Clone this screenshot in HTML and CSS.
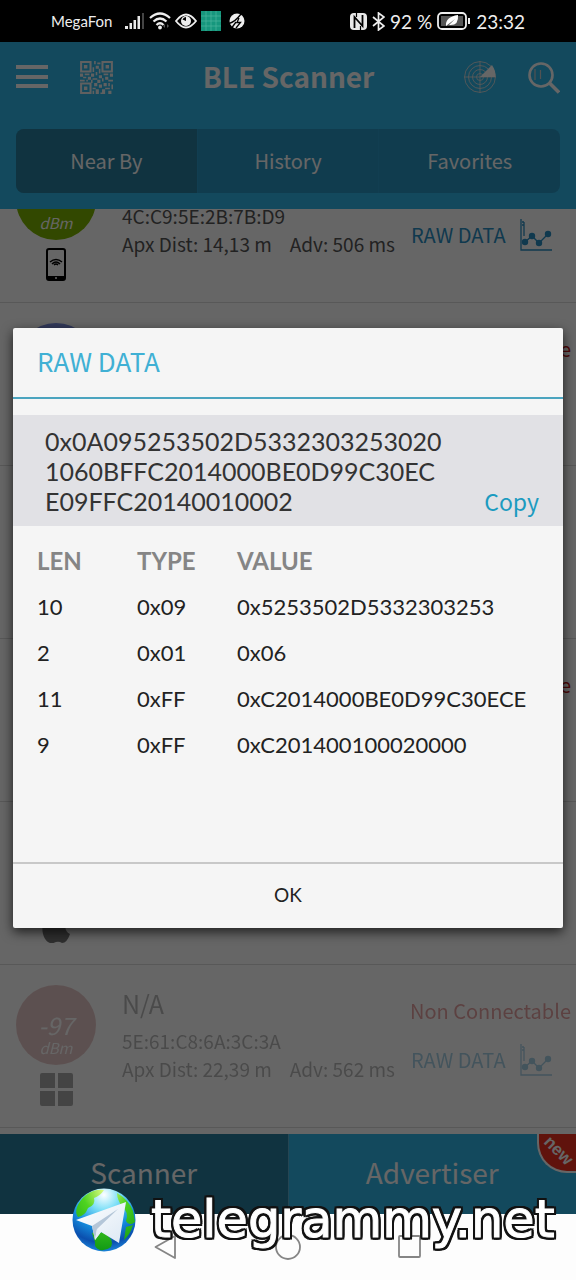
FILE: index.html
```html
<!DOCTYPE html>
<html lang="en">
<head>
<meta charset="utf-8">
<meta name="viewport" content="width=device-width, initial-scale=1">
<title>BLE Scanner</title>
<link rel="stylesheet" href="styles.css">
</head>
<body>
<svg class="defs" aria-hidden="true">
  <symbol id="chart" viewBox="0 0 32 32">
    <g fill="none" stroke="currentColor"><path d="M1 0V31H32M4 3v14M2 3h2M2 6h2" stroke-width="1.3"/><path d="M5 23L12 17L19 24L28 15" stroke-width="1.3"/></g>
    <g fill="currentColor"><circle cx="5" cy="23" r="3.2"/><circle cx="12" cy="17" r="3.2"/><circle cx="19" cy="24" r="3.2"/><circle cx="28" cy="15" r="3.2"/></g>
  </symbol>
</svg>
<div class="phone">
  <div class="status">
    <div class="status-group">
      <span class="carrier">MegaFon</span>
      <svg width="20" height="18" viewBox="0 0 20 18"><path d="M0 14h3v3H0zM4.500 11h2.500v6H4.500zM8.500 8h2.500v9H8.500zM12.500 4h2.500v13h-2.500z" fill="#e8e8e8"/><path d="M17 1h2v16h-2z" fill="#444"/></svg>
      <svg width="22" height="18" viewBox="0 0 22 18"><g fill="none" stroke="#eee" stroke-width="2.200"><path d="M1 6Q11-3 21 6M4.500 9.500Q11 3.500 17.500 9.500M7.500 13Q11 9.500 14.500 13"/></g><circle cx="11" cy="15.500" r="1.900" fill="#eee"/><path d="M16 12l-2 2 2 2zM18 12l2 2-2 2z" fill="#555"/></svg>
      <svg width="22" height="16" viewBox="0 0 22 16"><path d="M1 8Q11-5 21 8Q11 21 1 8z" fill="none" stroke="#eee" stroke-width="1.800"/><circle cx="11" cy="8" r="5" fill="#eee"/><path d="M11 8V4A4 4 0 0 0 7.500 6.500z" fill="#000"/></svg>
      <svg width="20" height="20" viewBox="0 0 20 20"><path d="M0 0h20v20H0z" fill="#16977d"/><path d="M5 0v20M10 0v20M15 0v20M0 5h20M0 10h20M0 15h20" stroke="#4bb49f" stroke-width=".7"/></svg>
      <svg class="ball" width="16" height="16" viewBox="0 0 16 16"><circle cx="8" cy="8" r="7.500" fill="#eee"/><path d="M0 10.500Q6 9 12 1M10 5L8 9.500H11.500L7 15M3 14.500L7 9" fill="none" stroke="#000" stroke-width="1.300"/></svg>
    </div>
    <div class="status-group right">
      <svg width="17" height="17" viewBox="0 0 17 17"><rect width="17" height="17" rx="4" fill="#e8e8e8"/><path d="M4.500 15V4L12.500 13V2" fill="none" stroke="#000" stroke-width="1.800"/><path d="M6.500 0v4M10.500 17v-4" stroke="#000" stroke-width="1.200"/></svg>
      <svg width="13" height="19" viewBox="0 0 13 19"><path d="M1 5L12 14L6.500 18V1L12 5L1 14" fill="none" stroke="#eee" stroke-width="1.700"/></svg>
      <span>92 %</span>
      <svg width="34" height="18" viewBox="0 0 34 18"><rect x="1" y="1" width="28" height="16" rx="4" fill="#000" stroke="#eee" stroke-width="1.800"/><rect x="4" y="4" width="22" height="10" fill="#555"/><path d="M9 14Q8 5 21 3Q22 14 12 13L18 7L9 14z" fill="#fff"/><path d="M32 6v6" stroke="#eee" stroke-width="2"/></svg>
      <span class="clock">23:32</span>
    </div>
  </div>

  <div class="screen">
    <header class="header">
      <div class="toolbar">
        <button class="icon-btn" aria-label="Menu"><svg width="32" height="24" viewBox="0 0 32 24"><path d="M0 2h32M0 12h32M0 21h32" stroke="#fff" stroke-width="4"/></svg></button>
        <button class="icon-btn" aria-label="QR code"><svg width="33" height="33" viewBox="0 0 21 21"><g fill="none" stroke="#f0f0f0" stroke-width="1.300"><path d="M.7.7h6v6h-6zM14.300.7h6v6h-6zM.7 14.300h6v6h-6z"/></g><path fill="#f0f0f0" d="M2.500 2.500h2.200v2.200H2.500zM16.300 2.500h2.200v2.200h-2.200zM2.500 16.300h2.200v2.200H2.500zM9 0h1v2H9zM11 1h2v1h-2zM10 3h2v2h-2zM8 4h1v3H8zM12 5h1v3h-1zM10 7h1v2h-1zM0 8h2v2H0zM3 8h3v1H3zM2 10h2v1H2zM0 12h3v1H0zM5 10h2v2H5zM4 12h1v1H4zM7 8h2v2H7zM8 11h3v1H8zM7 12h1v2H7zM12 9h2v2h-2zM15 8h3v1h-3zM19 8h2v2h-2zM16 10h2v2h-2zM14 11h1v2h-1zM18 12h3v1h-3zM11 12h2v2h-2zM9 14h2v2H9zM8 17h2v1H8zM10 18h2v3h-2zM12 15h2v2h-2zM15 14h2v2h-2zM18 14h1v2h-1zM20 15h1v3h-1zM16 17h3v1h-3zM14 18h2v2h-2zM18 19h2v2h-2zM8 19h1v2H8zM13 20h3v1h-3z"/></svg></button>
        <h1 class="title">BLE Scanner</h1>
        <button class="icon-btn" aria-label="Radar"><svg width="32" height="32" viewBox="0 0 32 32"><g fill="none" stroke="#ddd" stroke-width=".9"><circle cx="16" cy="16" r="15.400"/><circle cx="16" cy="16" r="11.500"/><circle cx="16" cy="16" r="7.500"/><circle cx="16" cy="16" r="3.500"/><path d="M16 0v32M0 16h32"/></g><path d="M16 16L28 4Q32 10 31.500 16z" fill="#fff"/></svg></button>
        <button class="icon-btn" aria-label="Search"><svg width="32" height="33" viewBox="0 0 32 33"><circle cx="13" cy="14" r="11.500" fill="none" stroke="#fff" stroke-width="2.600"/><path d="M21.500 22L31 31.500" stroke="#fff" stroke-width="3.500"/><path d="M7 8v11M12.500 9v9" stroke="#ccc" stroke-width="1.200"/></svg></button>
      </div>
      <nav class="tabs">
        <button class="tab active">Near By</button>
        <button class="tab">History</button>
        <button class="tab">Favorites</button>
      </nav>
    </header>

    <main class="list">
      <article class="device">
        <div class="signal">
          <div class="badge green"><i>dBm</i></div>
          <svg width="20" height="33" viewBox="0 0 20 33"><rect x="1" y="1" width="18" height="31" rx="2" fill="none" stroke="#000" stroke-width="2"/><path d="M1 28h18v4H1z"/><circle cx="10" cy="30" r="1" fill="#fff"/><path d="M4 14Q10 9 16 14M6 16Q10 12 14 16M8 17Q10 15 12 17" fill="none" stroke="#000" stroke-width="1.500"/></svg>
        </div>
        <div class="info">
          <h2></h2>
          <p>4C:C9:5E:2B:7B:D9</p>
          <p class="stats"><span>Apx Dist: 14,13 m</span><span>Adv: 506 ms</span></p>
        </div>
        <div class="actions">
          <span class="warn"></span>
          <button class="raw">RAW DATA <svg width="32" height="32"><use href="#chart"/></svg></button>
        </div>
      </article>
      <article class="device">
        <div class="signal"><div class="badge blue"></div></div>
        <div class="actions"><span class="warn">Non Connectable</span></div>
      </article>
      <article class="device tall"></article>
      <article class="device">
        <div class="actions"><span class="warn">Non Connectable</span></div>
      </article>
      <article class="device">
        <div class="signal">
          <div class="badge"></div>
          <svg width="28" height="33" viewBox="0 0 28 33"><path d="M14 9C17 9 19 7 22 8Q25 8 27 11C22 14 22 21 28 24Q25 33 20 33Q17 31 14 32Q10 34 8 33C2 31-2 20 2 12C5 6 10 8 14 9zM14 7Q13 1 20 0Q20 6 14 7z" fill="#777"/></svg>
        </div>
      </article>
      <article class="device">
        <div class="signal faded">
          <div class="badge red"><b>-97</b><i>dBm</i></div>
          <svg width="33" height="33" viewBox="0 0 33 33"><path d="M2 0h13v15H0V2q0-2 2-2zM18 0h13q2 0 2 2v13H18zM0 18h15v15H2q-2 0-2-2zM18 18h15v13q0 2-2 2H18z" fill="#444"/></svg>
        </div>
        <div class="info faded-text">
          <h2>N/A</h2>
          <p>5E:61:C8:6A:3C:3A</p>
          <p class="stats"><span>Apx Dist: 22,39 m</span><span>Adv: 562 ms</span></p>
        </div>
        <div class="actions faded-actions">
          <span class="warn">Non Connectable</span>
          <button class="raw">RAW DATA <svg width="32" height="32"><use href="#chart"/></svg></button>
        </div>
      </article>
    </main>

    <nav class="modes">
      <button class="mode active">Scanner</button>
      <button class="mode">Advertiser</button>
      <span class="ribbon"><span>new</span></span>
    </nav>

    <div class="backdrop">
      <section class="dialog" role="dialog" aria-labelledby="dialog-title">
        <h2 class="dialog-title" id="dialog-title">RAW DATA</h2>
        <div class="payload">
          <p>0x0A095253502D5332303253020<br>1060BFFC2014000BE0D99C30EC<br>E09FFC20140010002</p>
          <button class="copy">Copy</button>
        </div>
        <table class="fields">
          <thead><tr><th class="col">LEN</th><th class="col">TYPE</th><th>VALUE</th></tr></thead>
          <tbody>
            <tr><td>10</td><td>0x09</td><td>0x5253502D5332303253</td></tr>
            <tr><td>2</td><td>0x01</td><td>0x06</td></tr>
            <tr><td>11</td><td>0xFF</td><td>0xC2014000BE0D99C30ECE</td></tr>
            <tr><td>9</td><td>0xFF</td><td>0xC201400100020000</td></tr>
          </tbody>
        </table>
        <button class="ok">OK</button>
      </section>
    </div>
  </div>

  <nav class="system">
    <button class="icon-btn" aria-label="Back"><svg width="24" height="26" viewBox="0 0 24 26"><path d="M21 2V24L1.500 13z" fill="none" stroke="#858585" stroke-width="1.800" stroke-linejoin="round"/></svg></button>
    <button class="icon-btn" aria-label="Home"><svg width="26" height="26" viewBox="0 0 26 26"><circle cx="13" cy="13" r="12" fill="none" stroke="#858585" stroke-width="1.800"/></svg></button>
    <button class="icon-btn" aria-label="Recents"><svg width="24" height="26" viewBox="0 0 24 26"><rect x="1" y="2" width="21" height="21" rx="1" fill="none" stroke="#858585" stroke-width="1.800"/></svg></button>
  </nav>

  <div class="watermark">
    <svg width="64" height="64" viewBox="0 0 64 64">
      <defs>
        <radialGradient id="sea" cx=".5" cy=".1" r=".95"><stop offset="0" stop-color="#fff"/><stop offset=".25" stop-color="#7fe0f8"/><stop offset=".55" stop-color="#1590e0"/><stop offset=".8" stop-color="#0b4fae"/><stop offset="1" stop-color="#2196e8"/></radialGradient>
        <radialGradient id="land" cx=".5" cy="0" r="1"><stop offset="0" stop-color="#eaff8a"/><stop offset=".4" stop-color="#4ed320"/><stop offset="1" stop-color="#129a14"/></radialGradient>
        <linearGradient id="wing" x1="0" y1="0" x2="1" y2="1"><stop offset="0" stop-color="#fff"/><stop offset="1" stop-color="#dce8f4"/></linearGradient>
      </defs>
      <circle cx="32" cy="32" r="31.500" fill="url(#sea)"/>
      <path d="M14 7Q22 1 32 2Q28 8 22 10Q24 17 16 20Q13 28 6 29Q3 25 5 19Q8 12 14 7zM45 5Q57 12 61 23L63 34Q57 39 54 33Q57 24 51 20Q45 12 45 5zM20 45Q30 42 36 48Q42 53 39 59Q34 63 28 62Q22 60 23 54zM54 39L61 37Q58 47 52 52z" fill="url(#land)"/>
      <path d="M4 32L54 14L47 55L29 44L23 52L20 38z" fill="url(#wing)"/>
      <path d="M20 38L46 21L25 41L23 52z" fill="#b4c6d8"/>
      <path d="M25 41L29 44L23 52z" fill="#e4edf6"/>
    </svg>
    <span class="watermark-text">telegrammy.net</span>
  </div>
</div>
</body>
</html>
```
FILE: styles.css
```css
* { box-sizing: border-box; }

body {
  margin: 0;
  background: #fdfdfd;
  font-family: "Noto Sans CJK SC", "Noto Sans", sans-serif;
}

h1, h2, p { margin: 0; font-weight: 400; }

button {
  margin: 0;
  padding: 0;
  border: 0;
  background: none;
  color: inherit;
  font: inherit;
}

svg { display: block; flex: none; }

.defs { position: absolute; width: 0; height: 0; }

.phone {
  position: relative;
  display: flex;
  flex-direction: column;
  height: 100vh;
  overflow: hidden;
}

/* Status bar */
.status {
  display: flex;
  flex: none;
  justify-content: space-between;
  align-items: center;
  height: 42px;
  padding: 0 51px;
  background: #000;
  color: #eee;
  font-family: Lato, sans-serif;
  font-size: 19px;
}

.status-group { display: flex; align-items: center; gap: 4px; }
.status-group.right { gap: 5px; }
.carrier { margin-right: 9px; font-size: 15px; }
.ball { margin-left: 4px; }

/* App */
.screen {
  position: relative;
  display: flex;
  flex: 1;
  flex-direction: column;
  min-height: 0;
}

.header {
  flex: none;
  padding: 16px;
  background: #30b7e8;
  color: #fff;
}

.toolbar { display: flex; align-items: center; gap: 32px; height: 38px; }

.title {
  flex: 1;
  padding-bottom: 2px;
  text-align: center;
  font-size: 28px;
  font-weight: 700;
  line-height: 36px;
}

.tabs {
  display: flex;
  height: 64px;
  margin-top: 33px;
  overflow: hidden;
  border-radius: 8px;
  background: #2a96c3;
}

.tab { flex: 1; padding-bottom: 2px; font-size: 20px; }
.tab + .tab { border-left: 1px solid #2c9cca; }
.tab.active { background: #2880a0; }

.list {
  display: flex;
  flex: 1;
  flex-direction: column;
  justify-content: flex-end;
  min-height: 0;
  padding-bottom: 6px;
  overflow: hidden;
  background: #fff;
}

.device {
  display: flex;
  flex: none;
  height: 163px;
  padding: 20px 5px 0 16px;
  border-bottom: 1px solid #dcdcdc;
}

.device.tall { height: 173px; }

.signal {
  display: flex;
  flex: none;
  flex-direction: column;
  align-items: center;
  gap: 8px;
  width: 80px;
}

.badge {
  display: flex;
  flex-direction: column;
  align-items: center;
  justify-content: flex-end;
  width: 80px;
  height: 80px;
  padding-bottom: 7px;
  border-radius: 50%;
  color: #fff;
  font-style: italic;
}

.badge b { font-size: 24px; font-weight: 400; line-height: 26px; }
.badge i { font-size: 15px; line-height: 20px; }
.green { background: #7db400; }
.blue { background: #7d8fe0; }
.red { background: #cc8888; }

.info {
  flex: 1;
  padding-left: 26px;
  color: #555;
  font-size: 19px;
  font-weight: 300;
  line-height: 28px;
  white-space: nowrap;
}

.info h2 { height: 40px; font-size: 25px; line-height: 36px; }
.info p:nth-child(2) { padding-top: 2px; }
.stats { display: flex; gap: 18px; }

.actions {
  display: flex;
  flex: none;
  flex-direction: column;
  width: 160px;
  margin-left: auto;
  padding-top: 11px;
  white-space: nowrap;
}

.warn {
  align-self: flex-end;
  height: 30px;
  color: #c01818;
  font-size: 20px;
  line-height: 30px;
}

.raw {
  display: flex;
  align-items: center;
  gap: 14px;
  margin-top: 18px;
  color: #2a8ec4;
  font-size: 20px;
  line-height: 32px;
}

.faded { opacity: .45; }
.faded-text { opacity: .4; }
.faded-actions { opacity: .4; }

.modes {
  position: relative;
  display: flex;
  flex: none;
  height: 80px;
  background: #30b7e8;
  color: #fff;
  font-size: 28px;
}

.mode { flex: 1; padding-bottom: 4px; }
.mode.active { background: #2880a0; border-right: 1px solid #5cb0d0; }

.ribbon {
  position: absolute;
  top: 0;
  right: 0;
  display: flex;
  align-items: center;
  justify-content: center;
  width: 39px;
  height: 39px;
  padding: 0 0 4px 2px;
  border: solid #fff;
  border-width: 0 0 2px 2px;
  border-bottom-left-radius: 30px;
  background: #f03020;
  font: bold 17px/17px "Liberation Sans Narrow", "Liberation Sans", sans-serif;
}

.ribbon span { transform: rotate(45deg); }

/* Dialog */
.backdrop {
  position: absolute;
  inset: 0;
  display: flex;
  align-items: center;
  padding: 0 13px;
  background: rgba(0, 0, 0, .6);
}

.dialog {
  display: flex;
  flex: 1;
  flex-direction: column;
  min-height: 600px;
  border-radius: 2px;
  background: #f5f5f5;
  box-shadow: 0 4px 12px rgba(0, 0, 0, .7);
  color: #222;
  font-family: Lato, sans-serif;
}

.dialog-title {
  padding: 0 24px 4px;
  border-bottom: 2px solid #4ba4bf;
  color: #40b0d4;
  font-family: "Noto Sans CJK SC", sans-serif;
  font-size: 26px;
  line-height: 65px;
}

.payload {
  display: flex;
  align-items: flex-end;
  justify-content: space-between;
  margin-top: 16px;
  padding: 11px 24px 10px 32px;
  background: #e1e1e5;
  color: #333;
  font-size: 25px;
  line-height: 30px;
}

.copy {
  color: #1c9bc0;
  font-family: "Noto Sans CJK SC", sans-serif;
  font-size: 23px;
  line-height: 30px;
}

.fields {
  width: 100%;
  margin-top: 11px;
  border-collapse: collapse;
  font-size: 22px;
  table-layout: fixed;
}

.fields th, .fields td {
  height: 46px;
  padding: 0 0 0 24px;
  text-align: left;
  white-space: nowrap;
}

.fields th { color: #858585; font-size: 24px; font-weight: 700; }
.fields .col { width: 100px; }

.ok {
  height: 66px;
  margin-top: auto;
  padding-bottom: 3px;
  border-top: 2px solid #c8c8c8;
  font-size: 19px;
}

/* Android navigation */
.system {
  display: flex;
  flex: none;
  align-items: center;
  justify-content: center;
  gap: 97px;
  height: 66px;
  background: #fdfdfd;
}

.watermark {
  position: absolute;
  left: 72px;
  bottom: 28px;
  display: flex;
  align-items: center;
  gap: 15px;
}

.watermark-text {
  color: #fff;
  font: 51px/64px "DejaVu Sans", sans-serif;
  -webkit-text-stroke: 1px #fff;
  filter: drop-shadow(2px 0 0 #111) drop-shadow(-2px 0 0 #111) drop-shadow(0 2px 0 #111) drop-shadow(0 -2px 0 #111);
}
```
